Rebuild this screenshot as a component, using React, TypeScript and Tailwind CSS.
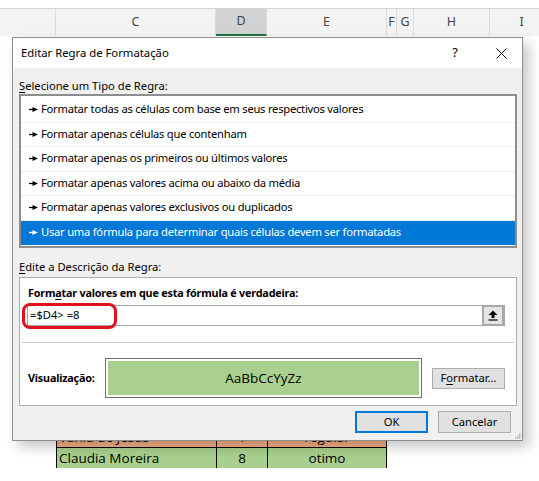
import React from "react";

const UI = { fontFamily: '"Noto Sans", "Open Sans", sans-serif' };
const CELL = { fontFamily: '"Open Sans", "Noto Sans", sans-serif' };

const RULES = [
  "Formatar todas as células com base em seus respectivos valores",
  "Formatar apenas células que contenham",
  "Formatar apenas os primeiros ou últimos valores",
  "Formatar apenas valores acima ou abaixo da média",
  "Formatar apenas valores exclusivos ou duplicados",
  "Usar uma fórmula para determinar quais células devem ser formatadas",
];

function RuleArrow({ color }: { color: string }) {
  return (
    <svg width="9" height="7" viewBox="0 0 9 7" className="shrink-0">
      <path d="M0 3.5 H5" stroke={color} strokeWidth="1.3" />
      <path d="M3.5 1 L9 3.5 L3.5 6 Z" fill={color} />
    </svg>
  );
}

function HeaderRow() {
  const cols = [
    { w: "w-[56px]", label: "" },
    { w: "w-[160px]", label: "C" },
    { w: "w-[51px]", label: "D", sel: true },
    { w: "w-[120px]", label: "E" },
    { w: "w-[10px]", label: "F" },
    { w: "w-[17px]", label: "G" },
    { w: "w-[76px]", label: "H" },
    { w: "w-[64px]", label: "I" },
  ];
  return (
    <div className="mt-[8px] flex h-[28px] border-t border-[#d4d4d4] bg-[#f3f3f3]">
      {cols.map((c, i) => (
        <div
          key={i}
          className={`${c.w} flex shrink-0 items-center justify-center border-r border-[#dadada] text-[12.5px] text-[#444] ${
            c.sel ? "border-b-2 border-b-[#217346] bg-[#d2d2d2] text-[#1f4e3a]" : ""
          }`}
        >
          {c.label}
        </div>
      ))}
    </div>
  );
}

function TableRow({ bg, name, num, status }: { bg: string; name: string; num: string; status: string }) {
  return (
    <div className={`ml-[56px] flex h-[21px] w-[331px] border-l border-t border-black ${bg} text-[13.5px] text-black`} style={CELL}>
      <div className="flex w-[160px] items-center border-r border-black pl-[2px]">{name}</div>
      <div className="flex w-[51px] items-center justify-center border-r border-black">{num}</div>
      <div className="flex w-[119px] items-center justify-center border-r border-black">{status}</div>
    </div>
  );
}

function Dialog() {
  return (
    <div
      className="absolute left-[12px] top-[37px] flex h-[404px] w-[511px] flex-col border border-[#8c8c8c] bg-[#f0f0f0] text-[11.2px] text-black shadow-[6px_6px_12px_rgba(0,0,0,0.22)]"
      style={UI}
    >
      {/* title bar */}
      <div className="flex h-[30px] items-center bg-white pl-[8px]">
        <span className="text-[11.3px]">Editar Regra de Formatação</span>
        <span className="ml-auto mr-[38px] text-[13px]">?</span>
        <svg width="11" height="11" viewBox="0 0 11 11" className="mr-[15px]">
          <path d="M0.5 0.5 L10.5 10.5 M10.5 0.5 L0.5 10.5" stroke="#111" strokeWidth="1" />
        </svg>
      </div>

      <div className="relative flex flex-1 flex-col pl-[6px] pr-[5px]">
        <div className="mt-[10px] h-[16px] leading-[16px]">
          <span className="underline underline-offset-2">S</span>elecione um Tipo de Regra:
        </div>

        {/* rule list */}
        <div className="h-[154px] border-2 border-[#8e8e8e] bg-white pt-[2px]">
          {RULES.map((r, i) => {
            const sel = i === RULES.length - 1;
            return (
              <div
                key={i}
                className={`flex h-[24.5px] items-center gap-[3px] pl-[8px] tracking-[-0.24px] ${
                  sel ? "bg-[#0078d7] text-white" : "border-b border-[#efefef]"
                }`}
              >
                <RuleArrow color={sel ? "#fff" : "#000"} />
                <span>{r}</span>
              </div>
            );
          })}
        </div>

        <div className="mt-[11px] h-[16px] leading-[16px]">
          <span className="underline underline-offset-2">E</span>dite a Descrição da Regra:
        </div>

        {/* description box */}
        <div className="mt-[2px] flex h-[129px] flex-col border border-[#adadad] bg-white">
          <div className="mt-[7px] h-[16px] pl-[8px] text-[10.8px] font-bold leading-[16px] tracking-[-0.2px]">
            Form<span className="underline underline-offset-2">a</span>tar valores em que esta fórmula é verdadeira:
          </div>
          <div className="ml-[7px] mt-[4px] flex h-[21px] w-[478px] items-center border border-[#a5a5a5] bg-white">
            <span className="pl-[2px]">=$D4&gt; =8</span>
            <div className="ml-auto flex h-[21px] w-[22px] items-center justify-center border-2 border-[#a8a8a8] bg-[#e4e4e4]">
              <svg width="10" height="11" viewBox="0 0 10 11">
                <path d="M5 0.5 L9.5 5 L6.5 5 L6.5 8 L3.5 8 L3.5 5 L0.5 5 Z" fill="#000" />
                <path d="M0.5 10 H9.5" stroke="#000" strokeWidth="1.2" />
              </svg>
            </div>
          </div>
          <div className="mx-[2px] mt-[16px] h-px bg-[#c8c8c8]" />
          <div className="mt-[15px] flex items-center">
            <span className="w-[85px] pl-[8px] text-[10.8px] font-bold tracking-[-0.2px]">Visualização:</span>
            <div className="h-[40px] w-[317px] border border-[#6f6f6f] bg-white p-[2px]">
              <div className="flex h-full items-center justify-center bg-[#a9d08e] text-[13.5px]" style={CELL}>
                AaBbCcYyZz
              </div>
            </div>
            <button className="ml-[10px] h-[21px] w-[73px] border border-[#adadad] bg-[#e1e1e1]">
              F<span className="underline underline-offset-2">o</span>rmatar...
            </button>
          </div>
        </div>

        {/* bottom buttons */}
        <div className="mt-[5px] flex justify-end gap-[10px] pr-[6px]">
          <button className="h-[22px] w-[73px] border-2 border-[#0078d7] bg-[#e1e1e1]">OK</button>
          <button className="h-[22px] w-[73px] border border-[#adadad] bg-[#e1e1e1]">Cancelar</button>
        </div>

        {/* resize grip */}
        <svg width="8" height="8" viewBox="0 0 8 8" className="absolute bottom-[1px] right-[1px]">
          {[
            [6, 0],
            [4, 2],
            [6, 2],
            [2, 4],
            [4, 4],
            [6, 4],
          ].map(([x, y], i) => (
            <rect key={i} x={x} y={y + 2} width="1.5" height="1.5" fill="#b5b5b5" />
          ))}
        </svg>

        {/* red highlight around formula */}
        <div className="pointer-events-none absolute left-[9px] top-[235px] h-[26px] w-[95px] rounded-[8px] border-[3px] border-[#e0101e]" />
      </div>
    </div>
  );
}

export default function App() {
  return (
    <div className="relative h-[481px] w-[539px] overflow-hidden bg-white" style={UI}>
      <HeaderRow />
      <div className="h-[390px]" />
      <TableRow bg="bg-[#f4b084]" name="Vania de Jesus" num="1" status="regular" />
      <TableRow bg="bg-[#a9d08e]" name="Claudia Moreira" num="8" status="otimo" />
      <Dialog />
    </div>
  );
}
